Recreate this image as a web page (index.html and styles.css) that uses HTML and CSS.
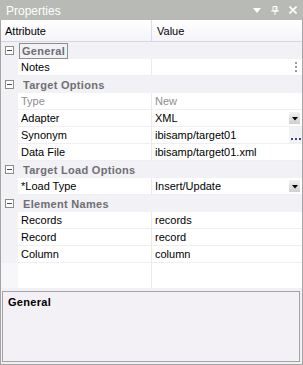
FILE: index.html
```html
<!DOCTYPE html>
<html>
<head>
<meta charset="utf-8">
<link rel="stylesheet" href="styles.css">
</head>
<body>
<div class="window">
  <div class="title">
    <span class="title-text">Properties</span>
    <span class="title-btns">
      <svg width="8" height="5" viewBox="0 0 8 5"><path d="M0 0H8L4 5Z" fill="#fff"/></svg>
      <svg width="8" height="9" viewBox="0 0 8 9"><path d="M2 0.5H6V5H2Z M4 5V9 M0 5H8" fill="none" stroke="#fff" stroke-width="1"/><path d="M5 1V5" stroke="#fff" stroke-width="1"/></svg>
      <svg width="8" height="8" viewBox="0 0 8 8"><path d="M0.5 0.5L7.5 7.5M7.5 0.5L0.5 7.5" stroke="#fff" stroke-width="1.6"/></svg>
    </span>
  </div>
  <div class="grid">
    <div class="header">
      <div class="h-name">Attribute</div>
      <div class="h-val">Value</div>
    </div>
    <div class="cat"><span class="exp"></span><span class="cat-label focus">General</span></div>
    <div class="row"><span class="m"></span><span class="name">Notes</span><span class="val"><span class="vt"></span><span class="vdots"><i></i><i></i><i></i></span></span></div>
    <div class="cat"><span class="exp"></span><span class="cat-label">Target Options</span></div>
    <div class="row"><span class="m"></span><span class="name dis">Type</span><span class="val"><span class="vt dis">New</span></span></div>
    <div class="row"><span class="m"></span><span class="name">Adapter</span><span class="val"><span class="vt">XML</span><span class="drop"><svg width="6" height="4" viewBox="0 0 6 4"><path d="M0 0H6L3 3.5Z" fill="#000"/></svg></span></span></div>
    <div class="row"><span class="m"></span><span class="name">Synonym</span><span class="val"><span class="vt">ibisamp/target01</span><span class="ell"><i></i><i></i><i></i></span></span></div>
    <div class="row"><span class="m"></span><span class="name">Data File</span><span class="val"><span class="vt">ibisamp/target01.xml</span></span></div>
    <div class="cat"><span class="exp"></span><span class="cat-label">Target Load Options</span></div>
    <div class="row"><span class="m"></span><span class="name">*Load Type</span><span class="val"><span class="vt">Insert/Update</span><span class="drop"><svg width="6" height="4" viewBox="0 0 6 4"><path d="M0 0H6L3 3.5Z" fill="#000"/></svg></span></span></div>
    <div class="cat"><span class="exp"></span><span class="cat-label">Element Names</span></div>
    <div class="row"><span class="m"></span><span class="name">Records</span><span class="val"><span class="vt">records</span></span></div>
    <div class="row"><span class="m"></span><span class="name">Record</span><span class="val"><span class="vt">record</span></span></div>
    <div class="row"><span class="m"></span><span class="name">Column</span><span class="val"><span class="vt">column</span></span></div>
    <div class="filler"><span class="m"></span><span class="name"></span><span class="val"></span></div>
  </div>
  <div class="desc">
    <div class="desc-title">General</div>
  </div>
</div>
</body>
</html>
```
FILE: styles.css
```css
html, body {
  margin: 0;
  padding: 0;
  background: #ffffff;
}
body {
  font-family: "Liberation Sans", Arial, sans-serif;
  font-size: 11px;
  color: #000;
}
.window {
  width: 303px;
  height: 365px;
  box-sizing: border-box;
  border: 1px solid #a5a5a5;
  border-top: none;
  background: #f1f0f4;
  display: flex;
  flex-direction: column;
}
.title {
  height: 20px;
  margin: 0 -1px;
  background: #b8bab5;
  display: flex;
  align-items: center;
  justify-content: space-between;
  padding: 0 6px 0 6px;
  color: #fff;
  font-size: 12px;
}
.title-text {
  padding-top: 1px;
}
.title-btns {
  display: flex;
  align-items: center;
  gap: 10px;
}
.title-btns svg {
  display: block;
}
.grid {
  display: flex;
  flex-direction: column;
  background: #fff;
}
.header {
  height: 21px;
  display: flex;
  border-bottom: 1px solid #d6d6dc;
  background: linear-gradient(#ffffff, #f4f4f9);
}
.h-name {
  width: 146px;
  padding: 5px 0 0 4px;
  border-right: 1px solid #dcdce2;
}
.h-val {
  padding: 5px 0 0 5px;
}
.cat {
  height: 17px;
  display: flex;
  align-items: center;
  background: #f2f1f6;
}
.exp {
  width: 7px;
  height: 7px;
  border: 1px solid #8c8c8c;
  background: #fff;
  margin: 0 0 0 4px;
  position: relative;
  flex: none;
}
.exp::after {
  content: "";
  position: absolute;
  left: 1px;
  top: 3px;
  width: 5px;
  height: 1px;
  background: #4a4a4a;
}
.cat-label {
  margin-left: 6px;
  font-weight: bold;
  color: #6f6f73;
  letter-spacing: 0.3px;
  padding: 1px 2px 1px 2px;
  border: 1px solid transparent;
}
.cat-label.focus {
  border-color: #8e8e8e;
  margin-left: 5px;
}
.row, .filler {
  height: 17px;
  display: flex;
}
.filler {
  height: 25px;
}
.m {
  width: 17px;
  flex: none;
  background: #f2f1f6;
}
.filler .m {
  background: #f7f7f9;
}
.name {
  width: 130px;
  flex: none;
  padding-left: 3px;
  line-height: 16px;
  border-bottom: 1px solid #efeff3;
  background: #fff;
}
.val {
  flex: 1;
  display: flex;
  align-items: stretch;
  border-left: 1px solid #ebebef;
  border-bottom: 1px solid #efeff3;
  background: #fff;
}
.filler .name, .filler .val {
  border-bottom: none;
}
.vt {
  flex: 1;
  padding-left: 3px;
  line-height: 16px;
}
.dis {
  color: #8d8d91;
}
.drop {
  width: 11px;
  height: 12px;
  margin: 2px 2px 0 0;
  background: linear-gradient(#f2f2f2, #cfcfcf);
  display: flex;
  align-items: center;
  justify-content: center;
}
.drop svg {
  display: block;
  margin-top: 1px;
}
.ell {
  width: 13px;
  background: #f2f1f6;
  display: flex;
  align-items: flex-end;
  justify-content: center;
  gap: 2px;
  padding-bottom: 3px;
  box-sizing: border-box;
}
.ell i {
  display: block;
  width: 2px;
  height: 2px;
  background: #3a4a7a;
}
.vdots {
  width: 13px;
  display: flex;
  flex-direction: column;
  align-items: center;
  justify-content: center;
  gap: 2px;
}
.vdots i {
  display: block;
  width: 2px;
  height: 2px;
  background: #9a9a9a;
}
.desc {
  margin: 3px 2px 2px 1px;
  flex: 1;
  border: 1px solid #a3a3a3;
  background: #f3f1f5;
  padding: 4px 5px;
}
.desc-title {
  font-weight: bold;
  letter-spacing: 0.3px;
}
```
